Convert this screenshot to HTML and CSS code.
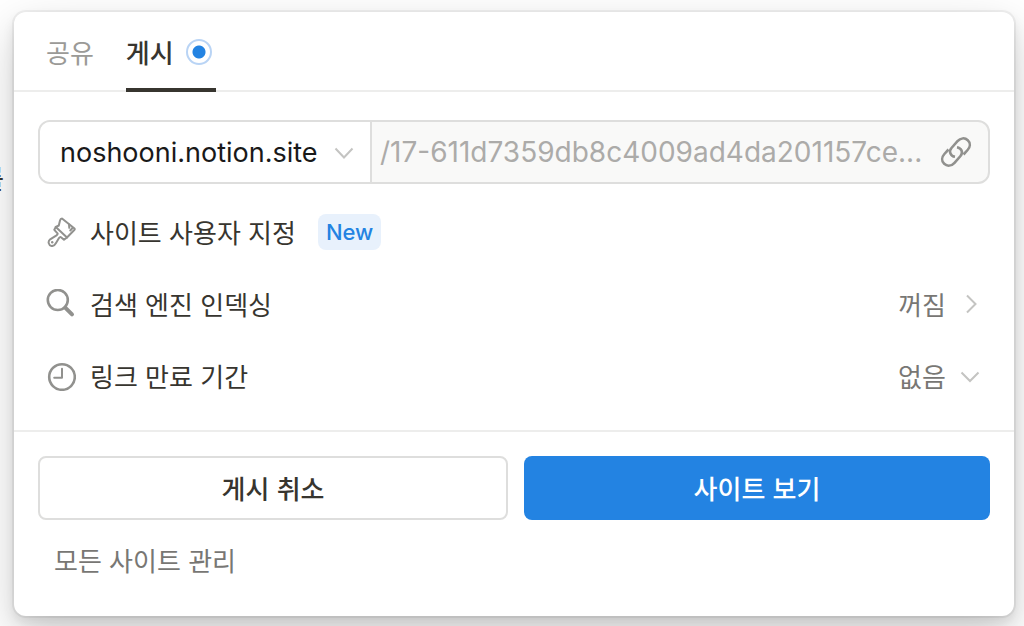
FILE: index.html
```html
<!DOCTYPE html>
<html lang="ko">
<head>
<meta charset="utf-8">
<meta name="viewport" content="width=device-width, initial-scale=1">
<title>게시</title>
<link rel="stylesheet" href="styles.css">
</head>
<body>
<span class="page-text">를</span>
<main class="card">
  <div class="tabs" role="tablist">
    <button class="tab" type="button" role="tab" aria-selected="false">공유</button>
    <button class="tab tab-active" type="button" role="tab" aria-selected="true">게시<span class="live"></span></button>
  </div>

  <section class="settings">
    <div class="address">
      <div class="domain">
        <select class="domain-select" aria-label="도메인"><option>noshooni.notion.site</option></select>
        <svg class="chevron" viewBox="0 0 20 20" aria-hidden="true"><path d="M1.5 5.5 10 14.5 18.5 5.5"/></svg>
      </div>
      <div class="slug">
        <input class="slug-input" type="text" readonly aria-label="페이지 주소" value="/17-611d7359db8c4009ad4da201157ce...">
        <button class="copy" type="button" aria-label="링크 복사">
          <svg class="icon icon-link" viewBox="0 0 32 32" aria-hidden="true">
            <path d="M15 20.800C10.500 20 8.500 15.500 11.500 12L17.500 5.200C20.500 1.900 24.800 1.500 27.800 4.200C30.800 7 30.300 11 27.600 14L23.500 18.500"/>
            <path d="M17 11.200C21.500 12 23.500 16.500 20.500 20L14.500 26.800C11.500 30.100 7.200 30.500 4.200 27.800C1.200 25 1.700 21 4.400 18L8.500 13.500"/>
          </svg>
        </button>
      </div>
    </div>

    <button class="row" type="button">
      <svg class="icon icon-brush" viewBox="0 0 30 30" aria-hidden="true">
        <path d="M16 1.500 28.500 11.500Q29 12.300 28.300 13L21 20.500 9.800 10 12.800 8.500 14 3.500Q14.500 1.500 16 1.500Z"/>
        <path d="M9.800 10 8.300 12.800 11.500 16.300Q12 17.300 10.500 18.300L4.200 22.300C1.500 24.300 2.500 28.300 5.500 29C8 29.300 9.200 27.500 10 26L13 21Q14 19.500 15.300 20.500L18 22.800 21 20.500M23 7.500 23.300 10.800M26.500 11 24.300 13.500"/>
        <circle class="solid" cx="6.200" cy="25.300" r="1.200"/>
      </svg>
      <span>사이트 사용자 지정</span>
      <span class="badge">New</span>
    </button>

    <button class="row" type="button">
      <svg class="icon" viewBox="0 0 30 30" aria-hidden="true"><circle cx="11.800" cy="11" r="10"/><path class="handle" d="m19.200 18.600 6.800 6.800"/></svg>
      <span>검색 엔진 인덱싱</span>
      <span class="value">꺼짐</span>
      <svg class="chevron" viewBox="0 0 20 20" aria-hidden="true"><path d="M7 1.500 15.500 10 7 18.500"/></svg>
    </button>

    <div class="row">
      <svg class="icon" viewBox="0 0 30 30" aria-hidden="true"><circle cx="16" cy="16" r="12.800"/><path class="thin" d="M16 7.800V16.800H8.200"/></svg>
      <label for="expiry">링크 만료 기간</label>
      <select class="value" id="expiry"><option>없음</option></select>
      <svg class="chevron" viewBox="0 0 20 20" aria-hidden="true"><path d="M1.500 6.500 10 15 18.500 6.500"/></svg>
    </div>
  </section>

  <footer class="footer">
    <div class="actions">
      <button class="button button-outline" type="button">게시 취소</button>
      <button class="button button-primary" type="button">사이트 보기</button>
    </div>
    <a class="manage" href="#">모든 사이트 관리</a>
  </footer>
</main>
</body>
</html>
```
FILE: styles.css
```css
* {
  box-sizing: border-box;
}

body {
  margin: 0;
  padding: 12px 10px 10px 14px;
  overflow: hidden;
  background: #fff;
  color: #37352f;
  font: 26px/40px "Noto Sans CJK KR", sans-serif;
}

button,
select,
input {
  margin: 0;
  padding: 0;
  border: 0;
  background: none;
  color: inherit;
  font: inherit;
}

select {
  appearance: none;
}

.page-text {
  position: absolute;
  top: 158px;
  left: -20px;
  font-weight: 500;
}

.card {
  position: relative;
  border-radius: 12px;
  background: #fff;
  box-shadow: 0 0 0 2px rgba(15, 15, 15, 0.05), 0 6px 12px rgba(15, 15, 15, 0.1), 0 18px 48px rgba(15, 15, 15, 0.2);
}

.tabs {
  display: flex;
  gap: 32px;
  height: 80px;
  padding: 0 32px;
  border-bottom: 2px solid #ededec;
}

.tab {
  display: flex;
  align-items: center;
  gap: 12px;
  height: 80px;
  color: #9b9a97;
}

.tab-active {
  padding: 4px 4px 0 0;
  border-bottom: 4px solid #37352f;
  color: #37352f;
  font-weight: 500;
}

.live {
  width: 26px;
  height: 26px;
  border: 2px solid #b9d4f5;
  border-radius: 50%;
  background: radial-gradient(circle, #2383e2 6px, #fff 7px);
}

.settings {
  padding: 28px 24px 18px;
  border-bottom: 2px solid #ededec;
}

.address {
  display: flex;
  height: 64px;
  margin-bottom: 12px;
  overflow: hidden;
  border: 2px solid #dededd;
  border-radius: 12px;
  background: #f9f9f8;
  font-family: Inter, "Noto Sans CJK KR", sans-serif;
  font-size: 27px;
}

.domain {
  display: flex;
  align-items: center;
  gap: 16px;
  padding: 2px 16px 0 20px;
  border-right: 2px solid #dededd;
  background: #fff;
  color: #191919;
}

.slug {
  display: flex;
  flex: 1;
  align-items: center;
  gap: 16px;
  min-width: 0;
  padding: 0 16px 0 8px;
}

.slug-input {
  flex: 1;
  min-width: 0;
  color: #acaba9;
  font-size: 28px;
  text-overflow: ellipsis;
}

.copy {
  display: flex;
}

.icon {
  flex: none;
  width: 30px;
  height: 30px;
  fill: none;
  stroke: #91918e;
  stroke-width: 2.6;
  stroke-linejoin: round;
  stroke-linecap: round;
}

.icon-link {
  width: 32px;
  height: 32px;
  stroke-linecap: butt;
}

.icon-brush,
.thin {
  stroke-width: 2;
}

.handle {
  stroke-width: 4;
}

.solid {
  fill: #91918e;
  stroke: none;
}

.chevron {
  flex: none;
  width: 20px;
  height: 20px;
  fill: none;
  stroke: #c4c4c2;
  stroke-width: 2;
}

.row {
  display: flex;
  align-items: center;
  gap: 14px;
  width: 100%;
  height: 72px;
  padding: 0 10px 0 8px;
  text-align: left;
}

.badge {
  margin-left: 8px;
  padding: 0 8px;
  border-radius: 8px;
  background: #e8f1fc;
  color: #2383e2;
  font-family: Inter, sans-serif;
  font-size: 22px;
  font-weight: 500;
  line-height: 36px;
}

.value {
  margin-left: auto;
  color: #787774;
}

.footer {
  padding: 24px 24px 36px;
}

.actions {
  display: flex;
  gap: 16px;
  margin-bottom: 20px;
}

.button {
  flex: 1 1 0;
  height: 64px;
  border-radius: 8px;
  font-weight: 500;
}

.button-outline {
  border: 2px solid #dededd;
}

.button-primary {
  background: #2383e2;
  color: #fff;
}

.manage {
  display: block;
  width: fit-content;
  margin-left: 16px;
  color: #787774;
  text-decoration: none;
}
```
